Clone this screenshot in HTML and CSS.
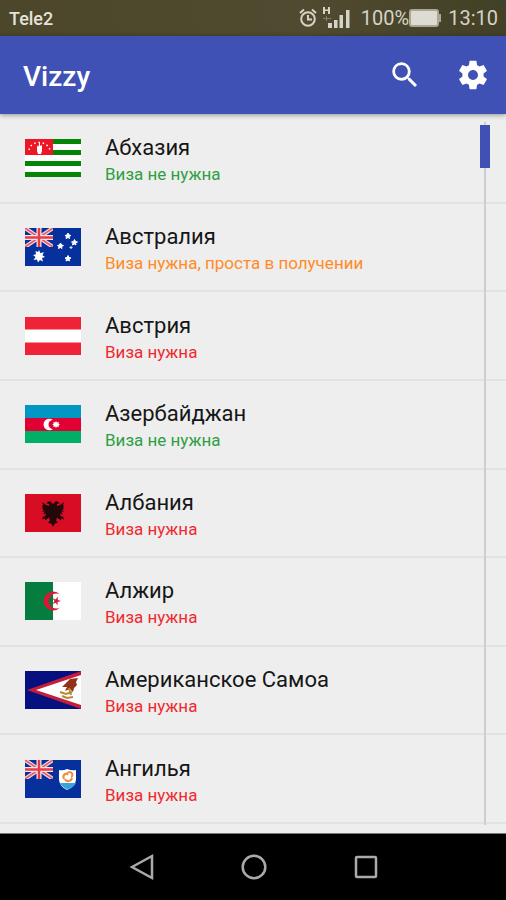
FILE: index.html
```html
<!DOCTYPE html>
<html lang="ru">
<head>
<meta charset="utf-8">
<meta name="viewport" content="width=device-width, initial-scale=1">
<title>Vizzy</title>
<link rel="stylesheet" href="styles.css">
</head>
<body>
<div class="status">
  <span class="carrier">Tele2</span>
  <svg class="alarm" width="18" height="20" viewBox="0 0 18 20" fill="none" stroke="currentColor" stroke-width="2"><circle cx="9" cy="11" r="6.8"/><path d="M9 7v4.500h4M1 5l4-3.500M17 5l-4-3.500"/></svg>
  <svg class="signal" width="28" height="24" viewBox="0 0 28 24" fill="currentColor"><path d="M0 1h2v2.500h3V1h2v7H5V5H2v3H0zM5 17h4v5H5zM11 14h3.500v8H11zM16.500 9h3.500v13h-3.500zM23 4h3.500v18H23z"/><path d="M0 12h8v1H0zM3 10h1v5H3z" opacity=".4"/></svg>
  <span class="percent">100%</span>
  <svg class="battery" width="32" height="18" viewBox="0 0 32 18"><rect x="1" y="1" width="28" height="16" rx="2" fill="#dedcd2" stroke="#aaa797" stroke-width="2"/><path d="M30 5h2v8h-2z" fill="#aaa797"/></svg>
  <span class="clock">13:10</span>
</div>
<header class="bar">
  <h1>Vizzy</h1>
  <button class="action" aria-label="Поиск"><svg width="34" height="34" viewBox="0 0 24 24" fill="currentColor"><path d="M15.500 14h-.79l-.28-.27A6.471 6.471 0 0 0 16 9.500 6.500 6.500 0 1 0 9.500 16c1.610 0 3.090-.59 4.230-1.570l.27.280v.79l5 4.990L20.490 19l-4.990-5zm-6 0C7.010 14 5 11.990 5 9.500S7.010 5 9.500 5 14 7.010 14 9.500 11.990 14 9.500 14z"/></svg></button>
  <button class="action" aria-label="Настройки"><svg width="34" height="34" viewBox="0 0 24 24" fill="currentColor"><path d="M19.430 12.980c.04-.32.070-.64.070-.98s-.03-.66-.07-.98l2.110-1.650c.19-.15.240-.42.120-.64l-2-3.460c-.12-.22-.39-.3-.61-.22l-2.490 1c-.52-.4-1.080-.73-1.690-.98l-.38-2.650C14.460 2.180 14.250 2 14 2h-4c-.25 0-.46.180-.49.420l-.38 2.650c-.61.250-1.170.590-1.690.980l-2.490-1c-.23-.09-.49 0-.61.220l-2 3.460c-.13.220-.07.490.120.640l2.110 1.650c-.04.320-.07.650-.07.980s.03.660.070.980l-2.110 1.650c-.19.150-.24.420-.12.640l2 3.460c.12.220.390.300.610.220l2.490-1c.52.400 1.080.730 1.690.980l.38 2.650c.03.240.240.420.490.420h4c.25 0 .46-.18.490-.42l.38-2.650c.61-.25 1.170-.59 1.690-.98l2.490 1c.23.090.490 0 .61-.22l2-3.460c.12-.22.070-.49-.12-.64l-2.110-1.650zM12 15.500c-1.930 0-3.500-1.570-3.500-3.500s1.570-3.500 3.500-3.500 3.500 1.570 3.500 3.500-1.570 3.500-3.500 3.500z"/></svg></button>
</header>
<main class="content">
<ul class="countries">
  <li class="row">
    <svg class="flag" viewBox="0 0 56 38"><path fill="#fff" d="M0 0h56v38H0z"/><path fill="#058405" d="M0 0h56v5H0zM0 11h56v5H0zM0 22h56v5H0zM0 33h56v5H0z"/><path fill="#ed1624" d="M0 0h28v16H0z"/><path fill="#fff" d="M12 8l1-2 1 2V4h1v3l2-1v6l-1 3h-3l-1-3z"/><path d="M4 11C6 1 22 1 25 11" fill="none" stroke="#fff" stroke-width="1.500" stroke-dasharray="1.500 2.800"/></svg>
    <div class="text"><h2>Абхазия</h2><p class="free">Виза не нужна</p></div>
  </li>
  <li class="row">
    <svg class="flag" viewBox="0 0 56 38"><path fill="#06309b" d="M0 0h56v38H0z"/><svg width="28" height="19" viewBox="0 0 28 19"><path d="M0 0l28 19M28 0L0 19" stroke="#f5cfd4" stroke-width="4"/><path d="M0 0l28 19M28 0L0 19" stroke="#e25a68" stroke-width="1.500"/><path d="M14 0v19M0 9.500h28" stroke="#fbe3e4" stroke-width="5"/><path d="M14 0v19M0 9.500h28" stroke="#e33d49" stroke-width="2.500"/></svg><path fill="#fff" d="M14 22l1.500 3.300 3.300-1.300-1.300 3.300 2.500 1.700-3 1 1 3.500-3-1.500-2 2.500-1-3-3.500.5 2-3-2.500-2 3-.7-.5-3.300 2.500 1z"/><path fill="#fff" stroke="#fff" d="M43 5l1 2 2 .5-2 1 .5 2-1.500-1-2 1 .5-2-1.500-1 2-.5zM35.500 15l1 2 2 .5-2 1 .5 2-1.500-1-2 1 .5-2-1.500-1 2-.5zM49.500 11.500l1 2 2 .5-2 1 .5 2-1.500-1-2 1 .5-2-1.500-1 2-.5zM43 27.500l1 2 2 .5-2 1 .5 2-1.500-1-2 1 .5-2-1.500-1 2-.5zM46 18.500l1 1-1 1-1-1z"/></svg>
    <div class="text"><h2>Австралия</h2><p class="easy">Виза нужна, проста в получении</p></div>
  </li>
  <li class="row">
    <svg class="flag" viewBox="0 0 56 38"><path fill="#ee2436" d="M0 0h56v38H0z"/><path fill="#fff" d="M0 12.500h56v13H0z"/></svg>
    <div class="text"><h2>Австрия</h2><p class="need">Виза нужна</p></div>
  </li>
  <li class="row">
    <svg class="flag" viewBox="0 0 56 38"><path fill="#0098c3" d="M0 0h56v13H0z"/><path fill="#e00034" d="M0 13h56v13H0z"/><path fill="#00ae65" d="M0 26h56v12H0z"/><path fill="#fff" d="M28 15a5.800 5.800 0 1 0 0 9 4.500 4.500 0 1 1 0-9zM31 16l1 1.500 2-.5-.5 1.800 1.500.7-1.500.8.500 1.700-2-.5-1 1.500-.8-1.500-1.900.5.400-1.700-1.500-.8 1.500-.7-.4-1.800 1.900.5z"/></svg>
    <div class="text"><h2>Азербайджан</h2><p class="free">Виза не нужна</p></div>
  </li>
  <li class="row">
    <svg class="flag" viewBox="0 0 56 38"><path fill="#d80d24" d="M0 0h56v38H0z"/><path fill="#22080b" d="M28 10l-3-3-4 2 3 1v2l-3-1-4-3 1 3-1 1 1 2-1 1 2 1-2 2 3-.5-2 3 3-1-1 3-2 0-1 3 3-1 0 2 4-3 1 3-2 2 3 1 2 3 2-3 3-1-2-2 1-3 4 3 0-2 3 1-1-3-2 0-1-3 3 1-2-3 3 .5-2-2 2-1-1-1 1-2-1-1 1-3-4 3-3 1v-2l3-1-4-2z"/></svg>
    <div class="text"><h2>Албания</h2><p class="need">Виза нужна</p></div>
  </li>
  <li class="row">
    <svg class="flag" viewBox="0 0 56 38"><path fill="#fff" d="M0 0h56v38H0z"/><path fill="#057d3e" d="M0 0h28v38H0z"/><path fill="#d91738" d="M35 12.500a9.500 9.500 0 1 0 0 13 7.500 7.500 0 1 1 0-13zM36 19l-3.500 1 .2 3.500-2-2.800-3.200 1.300 2-3-2-2.800 3.300 1.200 2-2.800v3.500z"/></svg>
    <div class="text"><h2>Алжир</h2><p class="need">Виза нужна</p></div>
  </li>
  <li class="row">
    <svg class="flag" viewBox="0 0 56 38"><path fill="#06107f" d="M0 0h56v38H0z"/><path fill="#c51e3a" d="M56 0L2 19l54 19z"/><path fill="#fff" d="M56 4L11 19l45 15z"/><path fill="#913219" d="M53 7l-8 1-5 5-3 3 5 0-2 4 5-2 3 3 1-4 3-3-1-3z"/><path d="M35 21l6 2 6-2M37 25l5 2 6-1M44 17l2 7" fill="none" stroke="#b68a35" stroke-width="2"/></svg>
    <div class="text"><h2>Американское Самоа</h2><p class="need">Виза нужна</p></div>
  </li>
  <li class="row">
    <svg class="flag" viewBox="0 0 56 38"><path fill="#06309b" d="M0 0h56v38H0z"/><svg width="28" height="19" viewBox="0 0 28 19"><path d="M0 0l28 19M28 0L0 19" stroke="#f5cfd4" stroke-width="4"/><path d="M0 0l28 19M28 0L0 19" stroke="#e25a68" stroke-width="1.500"/><path d="M14 0v19M0 9.500h28" stroke="#fbe3e4" stroke-width="5"/><path d="M14 0v19M0 9.500h28" stroke="#e33d49" stroke-width="2.500"/></svg><path fill="#fff" d="M34 10q4 1 8-1 5 2 9 1v10q-1 7-9 10-7-3-8-10z"/><path fill="#38a4d8" d="M35 23h16q-2 4-8.500 6.500Q37 27 35 23z"/><path d="M39 19c-2-4 2-7 4-4M42 13c5-3 7 3 4 4M47 18c-1 4-6 4-7 1" fill="none" stroke="#ef8a3c" stroke-width="2"/></svg>
    <div class="text"><h2>Ангилья</h2><p class="need">Виза нужна</p></div>
  </li>
</ul>
<div class="track"><div class="thumb"></div></div>
</main>
<nav class="nav">
  <button aria-label="Назад"><svg width="26" height="28" viewBox="0 0 26 28"><path d="M3 14L23 3v22z"/></svg></button>
  <button aria-label="Домой"><svg width="26" height="28" viewBox="0 0 26 28"><circle cx="13" cy="14" r="11.300"/></svg></button>
  <button aria-label="Недавние"><svg width="26" height="28" viewBox="0 0 26 28"><rect x="3" y="4" width="20" height="20" rx="1"/></svg></button>
</nav>
</body>
</html>
```
FILE: styles.css
```css
* { box-sizing: border-box; }
body {
  margin: 0;
  min-height: 100vh;
  display: flex;
  flex-direction: column;
  background: #eee;
  font-family: Roboto, "Liberation Sans", sans-serif;
}
h1, h2, p, ul { margin: 0; padding: 0; }
button { border: 0; padding: 0; background: none; color: inherit; }
svg { display: block; flex: none; }

.status {
  height: 36px;
  display: flex;
  align-items: center;
  padding: 0 8px 0 9px;
  background: linear-gradient(90deg, #4c472a, #504a30 60%, #424026);
  color: #d5d3c6;
  font-size: 20px;
}
.carrier { margin-right: auto; font-size: 18px; font-weight: 500; color: #e4e2da; }
.signal { margin: 0 10px 0 6px; }
.battery { margin-right: 7px; }

.bar {
  position: relative;
  height: 78px;
  display: flex;
  align-items: center;
  gap: 34px;
  padding: 0 16px 0 23px;
  background: #3f51b5;
  color: #fff;
  box-shadow: 0 1px 5px rgba(0, 0, 0, .4);
}
.bar h1 { margin-right: auto; font-size: 28px; line-height: 32px; font-weight: 500; padding-top: 4px; }

.content { position: relative; flex: 1; display: flex; flex-direction: column; }
.countries {
  flex: 1;
  display: grid;
  grid-auto-rows: 1fr;
  list-style: none;
  padding: 1px 0 9px;
}
.row {
  display: flex;
  align-items: center;
  gap: 24px;
  padding-left: 25px;
  border-bottom: 2px solid #e2e2e2;
}
.flag { width: 56px; height: 38px; }
.text { padding-top: 4px; }
.row h2 { font-size: 22px; line-height: 28px; font-weight: 400; color: #161616; }
.row p { font-size: 17px; line-height: 24px; }
.free { color: #2f9e44; }
.easy { color: #ff8c26; }
.need { color: #ee2a30; }

.track {
  position: absolute;
  top: 8px;
  right: 20px;
  bottom: 8px;
  width: 2px;
  background: #cecece;
}
.thumb {
  position: absolute;
  top: 3px;
  left: -4px;
  width: 10px;
  height: 43px;
  background: #3f51b5;
}

.nav {
  height: 67px;
  display: flex;
  align-items: center;
  justify-content: center;
  gap: 86px;
  padding-left: 2px;
  border-top: 1px solid #777;
  background: #000;
}
.nav svg { fill: none; stroke: #aaa; stroke-width: 2.500; }
```
